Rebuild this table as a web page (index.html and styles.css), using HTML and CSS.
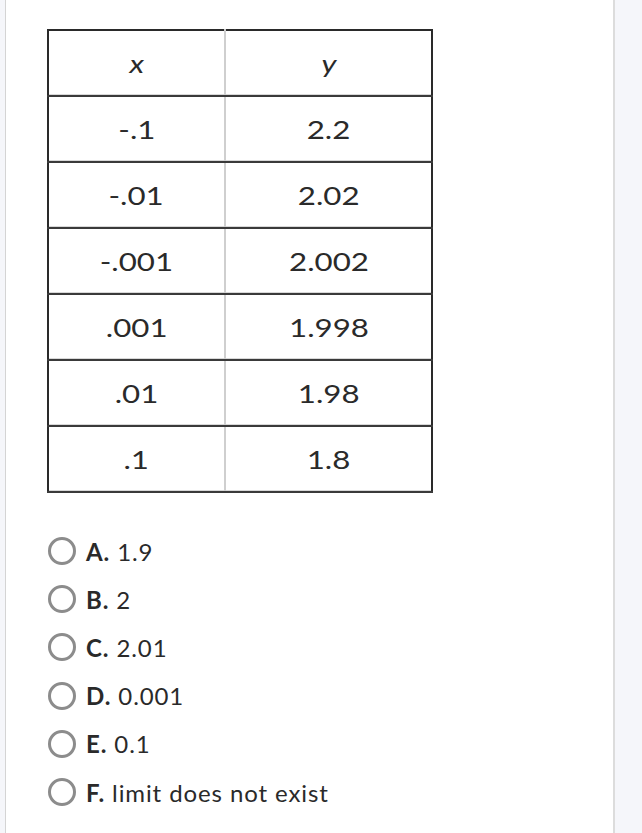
FILE: index.html
```html
<!DOCTYPE html>
<html lang="en">
<head>
<meta charset="utf-8">
<title>Limit table</title>
<link rel="stylesheet" href="styles.css">
</head>
<body>
<div class="panel">
  <table class="values">
    <tr><td class="col-x"><span class="cell var">x</span></td><td><span class="cell var">y</span></td></tr>
    <tr><td class="col-x"><span class="cell">-.1</span></td><td><span class="cell">2.2</span></td></tr>
    <tr><td class="col-x"><span class="cell">-.01</span></td><td><span class="cell">2.02</span></td></tr>
    <tr><td class="col-x"><span class="cell">-.001</span></td><td><span class="cell">2.002</span></td></tr>
    <tr><td class="col-x"><span class="cell">.001</span></td><td><span class="cell">1.998</span></td></tr>
    <tr><td class="col-x"><span class="cell">.01</span></td><td><span class="cell">1.98</span></td></tr>
    <tr><td class="col-x"><span class="cell">.1</span></td><td><span class="cell">1.8</span></td></tr>
  </table>
  <ul class="choices">
    <li class="choice"><span class="radio"></span><b>A.</b>&nbsp;1.9</li>
    <li class="choice"><span class="radio"></span><b>B.</b>&nbsp;2</li>
    <li class="choice"><span class="radio"></span><b>C.</b>&nbsp;2.01</li>
    <li class="choice"><span class="radio"></span><b>D.</b>&nbsp;0.001</li>
    <li class="choice"><span class="radio"></span><b>E.</b>&nbsp;0.1</li>
    <li class="choice"><span class="radio"></span><b>F.</b>&nbsp;limit does not exist</li>
  </ul>
</div>
</body>
</html>
```
FILE: styles.css
```css
html, body {
  margin: 0;
  padding: 0;
  background: #f5f6fa;
  height: 100%;
}
body {
  font-family: Lato, "Open Sans", sans-serif;
  color: #2a2a2a;
}
.panel {
  margin-left: 5px;
  width: 610px;
  min-height: 100%;
  box-sizing: border-box;
  background: #ffffff;
  border-left: 1px solid #d4d4d4;
  border-right: 2px solid #dcdcdc;
  padding: 29px 0 0 41px;
}
.values {
  border-collapse: collapse;
  table-layout: fixed;
  width: 386px;
  border: 2px solid #2a2a2a;
  font-size: 25px;
}
.values td {
  height: 64px;
  padding: 0;
  text-align: center;
  vertical-align: middle;
  border-bottom: 2px solid #3a3a3a;
  box-shadow: inset 0 -1px 0 #d8d8d8;
}
.values .col-x {
  width: 175px;
  border-right: 2px solid #cfcfcf;
}
.cell {
  display: inline-block;
  transform: scaleX(1.25);
}
.cell.var {
  font-style: italic;
}
.choices {
  list-style: none;
  margin: 34px 0 0 0;
  padding: 0;
}
.choice {
  display: flex;
  align-items: center;
  height: 48.2px;
  font-size: 24px;
  letter-spacing: 0.9px;
}
.choice b {
  font-weight: 700;
}
.radio {
  width: 28px;
  height: 28px;
  box-sizing: border-box;
  border: 3px solid #8c8c8c;
  border-radius: 50%;
  margin-right: 10px;
  margin-left: 1px;
  flex: none;
}
```
